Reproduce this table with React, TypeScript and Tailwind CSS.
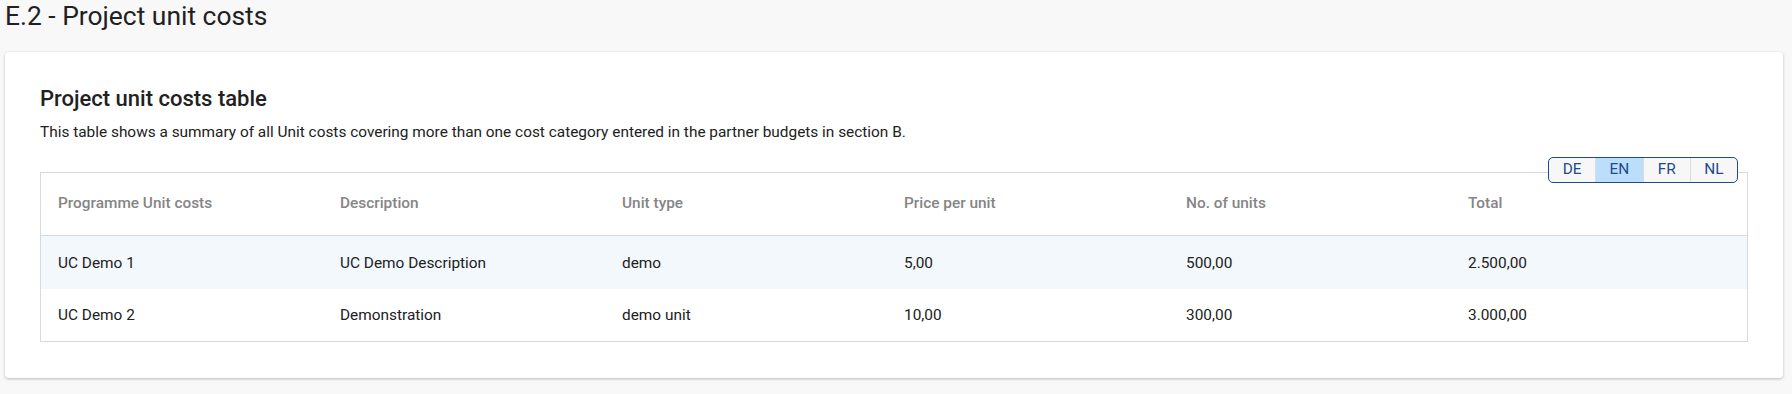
import React from "react";

const columns = [
  "Programme Unit costs",
  "Description",
  "Unit type",
  "Price per unit",
  "No. of units",
  "Total",
];

const rows = [
  ["UC Demo 1", "UC Demo Description", "demo", "5,00", "500,00", "2.500,00"],
  ["UC Demo 2", "Demonstration", "demo unit", "10,00", "300,00", "3.000,00"],
];

const languages = ["DE", "EN", "FR", "NL"];

const LanguageToggle = ({ active }: { active: string }) => (
  <div className="flex h-[26px] w-[190px] overflow-hidden rounded-[5px] border-[1.5px] border-[#1f4b8e] bg-[#f7f7f7]">
    {languages.map((lang, index) => (
      <div
        key={lang}
        className={`flex flex-1 items-center justify-center text-[15.4px] text-[#1f4b8e] ${
          index > 0 ? "border-l border-[#dcdcdc]" : ""
        } ${lang === active ? "bg-[#bbdefb]" : ""}`}
      >
        {lang}
      </div>
    ))}
  </div>
);

export default function App() {
  return (
    <div
      className="min-h-[394px] bg-[#f8f8f8] pl-[5px] pr-[9px]"
      style={{ fontFamily: "Roboto, 'Liberation Sans', sans-serif" }}
    >
      <h1 className="text-[26.4px] leading-[32px] text-[#212121]">E.2 - Project unit costs</h1>

      <div className="mt-[20px] rounded-[4px] bg-white px-[35px] pb-[36px] pt-[31px] shadow-[0_1px_3px_rgba(0,0,0,0.25)]">
        <h2 className="text-[22px] font-medium leading-[32px] text-[#212121]">
          Project unit costs table
        </h2>
        <p className="mt-[6px] text-[15.4px] leading-[22px] text-[#212121]">
          This table shows a summary of all Unit costs covering more than one cost category entered in
          the partner budgets in section B.
        </p>

        <div className="relative mt-[29px]">
          <div className="absolute right-[10px] top-[-15px]">
            <LanguageToggle active="EN" />
          </div>

          <div className="border border-[#d5dadf]">
            <div className="grid h-[63px] grid-cols-[repeat(6,282px)] items-center border-b border-[#d5dadf] pl-[17px]">
              {columns.map((col) => (
                <div key={col} className="text-[15.4px] font-medium text-[#858585]">
                  {col}
                </div>
              ))}
            </div>
            {rows.map((row, i) => (
              <div
                key={i}
                className={`grid grid-cols-[repeat(6,282px)] items-center pl-[17px] pt-[2px] ${
                  i === 0 ? "h-[53px] bg-[#f3f8fc]" : "h-[52px] bg-white"
                }`}
              >
                {row.map((cell, j) => (
                  <div key={j} className="text-[15.4px] text-[#212121]">
                    {cell}
                  </div>
                ))}
              </div>
            ))}
          </div>
        </div>
      </div>
    </div>
  );
}
